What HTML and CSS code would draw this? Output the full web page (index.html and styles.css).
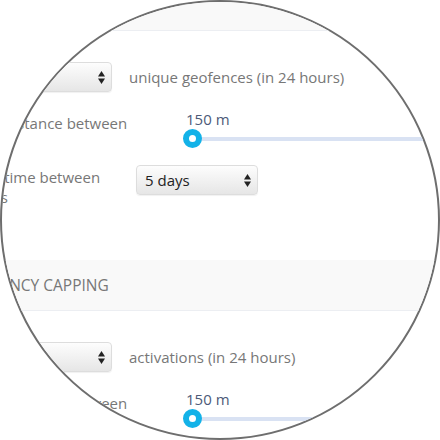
FILE: index.html
```html
<!DOCTYPE html>
<html lang="en">
<head>
    <meta charset="UTF-8">
    <meta name="viewport" content="width=device-width, initial-scale=1.0">
    <title>Geofence settings</title>
    <link rel="stylesheet" href="styles.css">
</head>
<body>
    <div class="lens">
        <div class="page">
            <div class="band band-top"></div>

            <div class="section">
                <div class="row">
                    <div class="select select-wide">
                        <span>3</span>
                        <svg class="arrows" width="7" height="13" viewBox="0 0 7 13"><polygon points="0,5.5 3.5,0 7,5.5"/><polygon points="0,7.5 7,7.5 3.5,13"/></svg>
                    </div>
                    <span class="hint">unique geofences (in 24 hours)</span>
                </div>

                <div class="row">
                    <div class="label label-slider">Minimum distance between activations</div>
                    <div class="slider">
                        <div class="value">150 m</div>
                        <div class="track"><span class="handle"></span></div>
                    </div>
                </div>

                <div class="row">
                    <div class="label label-select">Minimum time between activations</div>
                    <div class="select select-small">
                        <span>5 days</span>
                        <svg class="arrows" width="7" height="13" viewBox="0 0 7 13"><polygon points="0,5.5 3.5,0 7,5.5"/><polygon points="0,7.5 7,7.5 3.5,13"/></svg>
                    </div>
                </div>
            </div>

            <div class="band band-title">Frequency capping</div>

            <div class="section">
                <div class="row">
                    <div class="select select-wide">
                        <span>3</span>
                        <svg class="arrows" width="7" height="13" viewBox="0 0 7 13"><polygon points="0,5.5 3.5,0 7,5.5"/><polygon points="0,7.5 7,7.5 3.5,13"/></svg>
                    </div>
                    <span class="hint">activations (in 24 hours)</span>
                </div>

                <div class="row">
                    <div class="label label-slider">Minimum distance between activations</div>
                    <div class="slider">
                        <div class="value">150 m</div>
                        <div class="track"><span class="handle"></span></div>
                    </div>
                </div>
            </div>
        </div>
    </div>
</body>
</html>
```

FILE: styles.css
```css
body {
    margin: 0;
    background: #fff;
    font-family: "Open Sans", "Liberation Sans", sans-serif;
    font-size: 15px;
}

/* lupa circular */
.lens {
    width: 440px;
    height: 440px;
    box-sizing: border-box;
    border: 2px solid #6e6e6e;
    border-radius: 50%;
    overflow: hidden;
    background: #fff;
}

.page {
    width: 620px;
    margin-left: -69px;
}

.band {
    background-color: #f9f9f9;
    border-bottom: 1px solid #eceef2;
}

.band-top {
    height: 28px;
}

.band-title {
    height: 50px;
    line-height: 50px;
    padding-left: 18px;
    font-size: 15.5px;
    text-transform: uppercase;
    color: #777;
}

.section {
    padding: 31px 0 51px;
    display: flex;
    flex-direction: column;
    gap: 17px;
}

.row {
    display: flex;
    align-items: flex-start;
}

.label {
    width: 203px;
    flex: none;
    line-height: 20px;
    color: #777;
}

/* o rotulo quebra em duas linhas mas nao aumenta a linha */
.label-slider {
    padding-top: 4px;
    height: 36px;
}

.label-select {
    padding-top: 1px;
    height: 42px;
}

/* caixa de selecao */
.select {
    height: 30px;
    box-sizing: border-box;
    display: flex;
    align-items: center;
    justify-content: space-between;
    padding: 0 6px 0 8px;
    border: 1px solid #dddddd;
    border-radius: 4px;
    background: linear-gradient(#fdfdfd, #e6e6e6);
    box-shadow: 0 1px 1px rgba(0, 0, 0, 0.06);
    color: #222;
}

.select-wide {
    width: 179px;
}

.select-small {
    width: 122px;
    margin-top: -1px;
}

.arrows {
    fill: #222;
}

.hint {
    margin-left: 17px;
    line-height: 30px;
    color: #777;
}

/* controle deslizante */
.slider {
    padding-left: 47px;
    flex: 1;
}

.value {
    margin-left: 3px;
    height: 20px;
    line-height: 20px;
    color: #4d5a78;
}

.track {
    height: 20px;
    background: linear-gradient(#d9e2f3, #d9e2f3) no-repeat 10px center / 100% 4px;
}

.handle {
    display: block;
    width: 7px;
    height: 7px;
    border: 6.5px solid #13b2e8;
    border-radius: 50%;
    background: #fff;
}
```
